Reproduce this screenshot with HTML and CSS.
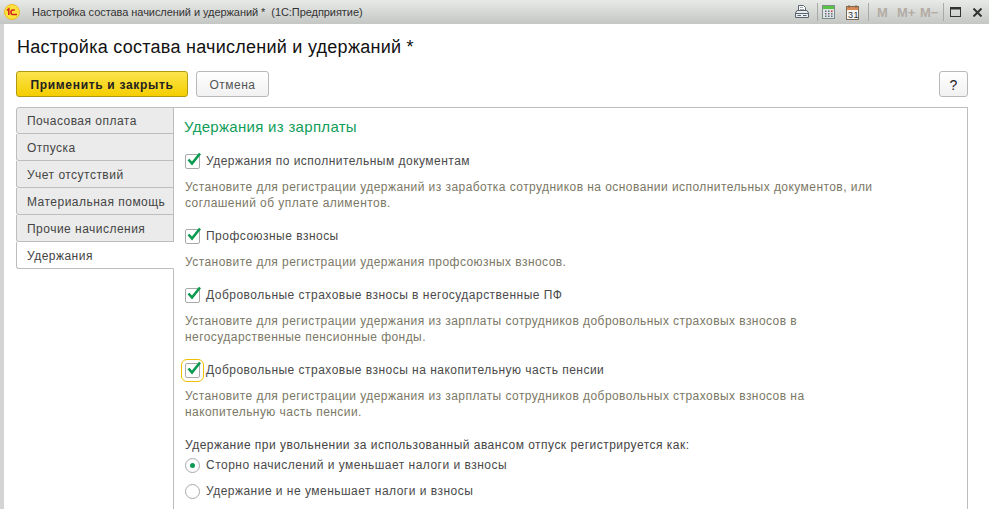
FILE: index.html
```html
<!DOCTYPE html>
<html lang="ru">
<head>
<meta charset="utf-8">
<title>Настройка состава начислений и удержаний</title>
<link rel="stylesheet" href="styles.css">
</head>
<body>
<header class="titlebar">
  <svg class="logo" width="18" height="18" viewBox="0 0 18 18"><circle cx="9" cy="9" r="7.500" fill="#fbe23c" stroke="#efb92c"/><path d="M4 7.500L5.800 6V12M11.800 7H9.700Q8 7 8 9.300T9.700 11.500H14" fill="none" stroke="#d3261c" stroke-width="1.600"/></svg>
  <span class="window-title">Настройка состава начислений и удержаний *&nbsp; (1С:Предприятие)</span>
  <div class="tools">
    <svg class="ic-print" width="16" height="14" viewBox="0 0 16 14" fill="none" stroke="#59656e"><path d="M4.500 5.500V.5H9.500L11.500 2.500V5.500" fill="#fff"/><path d="M6 2.500H9M6 4.500H10" stroke="#a5adb2"/><path d="M1.500 8L3 5.500H13L14.500 8V12.500H1.500Z" fill="#e9edef"/><path d="M1.500 8.500H14.500M3.500 10.500H7M9 10.500H12.500"/></svg>
    <i class="sep"></i>
    <svg class="ic-calc" width="13" height="14" viewBox="0 0 13 14"><rect x=".5" y=".5" width="12" height="13" fill="#dfe4e6" stroke="#7f8c8c"/><rect x="1" y="1" width="11" height="3" fill="#58c244"/><path d="M3 5.500h1.500v1.500H3zM6 5.500h1.500v1.500H6zM3 8h1.500v1.500H3zM6 8h1.500v1.500H6zM9 8h1.500v1.500H9zM3 10.500h1.500v1.500H3zM6 10.500h1.500v1.500H6zM9 10.500h1.500v1.500H9z" fill="#66707a"/><path d="M9 5.500h1.500v1.500H9z" fill="#d9302a"/></svg>
    <svg class="ic-cal" width="13" height="15" viewBox="0 0 13 15"><rect x=".5" y="1.500" width="12" height="13" fill="#f4f6f7" stroke="#7b6a58"/><rect x="1" y="2" width="11" height="3" fill="#d98a55"/><path d="M3 0v3M10 0v3" stroke="#8a6440"/><text x="2" y="13" class="cal-text">31</text></svg>
    <i class="sep sep-cal"></i>
    <span class="mem mem-m">M</span><span class="mem mem-p">M+</span><span class="mem mem-n">M−</span>
    <i class="sep sep-mem"></i>
    <svg class="win-ic" width="11" height="10" viewBox="0 0 11 10" fill="none" stroke="#333"><rect x=".5" y=".5" width="10" height="9"/><path d="M0 1.500H11" stroke-width="2"/></svg>
    <svg class="close-ic" width="9" height="9" viewBox="0 0 9 9" stroke="#333" stroke-width="2"><path d="M.5 .5L8.500 8.500M8.500 .5L.5 8.500"/></svg>
  </div>
</header>
<main class="window">
  <h1 class="form-title">Настройка состава начислений и удержаний *</h1>
  <div class="toolbar">
    <button class="btn btn-primary">Применить и закрыть</button>
    <button class="btn btn-cancel">Отмена</button>
    <button class="btn btn-help">?</button>
  </div>
  <div class="tabs-area">
    <nav class="tabs">
      <div class="tab">Почасовая оплата</div>
      <div class="tab">Отпуска</div>
      <div class="tab">Учет отсутствий</div>
      <div class="tab">Материальная помощь</div>
      <div class="tab">Прочие начисления</div>
      <div class="tab tab-active">Удержания</div>
    </nav>
    <section class="panel">
      <h2 class="panel-title">Удержания из зарплаты</h2>
      <label class="check"><span class="box"><svg width="16" height="15" viewBox="0 0 16 15"><path d="M2.500 7.500L6 11.500L14 1.500" fill="none" stroke="#0a9a50" stroke-width="2.600"/></svg></span>Удержания по исполнительным документам</label>
      <p class="hint">Установите для регистрации удержаний из заработка сотрудников на основании исполнительных документов, или<br>соглашений об уплате алиментов.</p>
      <label class="check"><span class="box"><svg width="16" height="15" viewBox="0 0 16 15"><path d="M2.500 7.500L6 11.500L14 1.500" fill="none" stroke="#0a9a50" stroke-width="2.600"/></svg></span>Профсоюзные взносы</label>
      <p class="hint">Установите для регистрации удержания профсоюзных взносов.</p>
      <label class="check"><span class="box"><svg width="16" height="15" viewBox="0 0 16 15"><path d="M2.500 7.500L6 11.500L14 1.500" fill="none" stroke="#0a9a50" stroke-width="2.600"/></svg></span>Добровольные страховые взносы в негосударственные ПФ</label>
      <p class="hint">Установите для регистрации удержания из зарплаты сотрудников добровольных страховых взносов в<br>негосударственные пенсионные фонды.</p>
      <label class="check"><span class="box box-focus"><svg width="16" height="15" viewBox="0 0 16 15"><path d="M2.500 7.500L6 11.500L14 1.500" fill="none" stroke="#0a9a50" stroke-width="2.600"/></svg></span>Добровольные страховые взносы на накопительную часть пенсии</label>
      <p class="hint">Установите для регистрации удержания из зарплаты сотрудников добровольных страховых взносов на<br>накопительную часть пенсии.</p>
      <p class="question">Удержание при увольнении за использованный авансом отпуск регистрируется как:</p>
      <label class="radio"><span class="dot dot-on"></span>Сторно начислений и уменьшает налоги и взносы</label>
      <label class="radio"><span class="dot"></span>Удержание и не уменьшает налоги и взносы</label>
    </section>
  </div>
</main>
</body>
</html>
```
FILE: styles.css
```css
* { box-sizing: border-box; }
html, body { margin: 0; height: 100%; overflow: hidden; }
body {
  width: 989px;
  height: 509px;
  background: #fff;
  font-family: "Liberation Sans", Arial, sans-serif;
  font-size: 12px;
  letter-spacing: .48px;
  color: #4a4a4a;
  display: flex;
  flex-direction: column;
}
.titlebar {
  height: 24px;
  flex: none;
  display: flex;
  align-items: center;
  padding-left: 3px;
  background: linear-gradient(#e8eae8, #c4c6c4);
}
.logo { flex: none; }
.window-title {
  margin-left: 11px;
  font-size: 11px;
  letter-spacing: -.06px;
  color: #333;
  white-space: pre;
}
.tools {
  margin-left: auto;
  display: flex;
  align-items: center;
  height: 24px;
  padding-right: 7px;
}
.sep { width: 1px; height: 18px; background: #a8aaa8; margin: 0 4px 0 7px; }
.ic-calc { flex: none; }
.ic-cal { margin-left: 11px; flex: none; }
.sep.sep-cal { margin: 0 8px 0 9px; }
.sep.sep-mem { margin: 0 6px 0 8px; }
.cal-text { font: 9px "Liberation Sans", sans-serif; fill: #333; }
.mem { font-size: 13px; font-weight: bold; color: #b3aca4; letter-spacing: 0; }
.mem-m { width: 9px; overflow: visible; margin-right: 11px; }
.mem-p { width: 17px; margin-right: 6px; }
.mem-n { width: 15px; }
.win-ic { margin-right: 12px; flex: none; }
.close-ic { flex: none; }
.window {
  flex: 1;
  min-height: 0;
  display: flex;
  flex-direction: column;
  border-left: 4px solid #d4d4d4;
  padding: 0 21px 0 12px;
}
.form-title {
  margin: 11px 0 0;
  height: 24px;
  font-size: 18px;
  line-height: 24px;
  font-weight: normal;
  letter-spacing: .26px;
  color: #111;
  padding-left: 1px;
}
.toolbar { display: flex; margin-top: 12px; height: 26px; }
.btn {
  height: 26px;
  border-radius: 3px;
  font-family: inherit;
  font-size: 12px;
  letter-spacing: .46px;
  padding: 1px 0 0;
  cursor: default;
}
.btn-primary {
  width: 172px;
  border: 1px solid #b29b10;
  background: linear-gradient(#fbe44e, #f5ce00);
  font-weight: bold;
  letter-spacing: .69px;
  color: #222;
}
.btn-cancel {
  width: 73px;
  margin-left: 8px;
  border: 1px solid #b8b8b8;
  background: linear-gradient(#fff, #f1f1f1);
  color: #555;
}
.btn-help {
  width: 29px;
  margin-left: auto;
  border: 1px solid #b8b8b8;
  background: linear-gradient(#fff, #f1f1f1);
  font-size: 14px;
  color: #222;
}
.tabs-area { flex: 1; min-height: 0; display: flex; margin-top: 10px; }
.tabs { width: 158px; flex: none; display: flex; flex-direction: column; }
.tab {
  height: 27px;
  padding: 1px 0 0 10px;
  display: flex;
  align-items: center;
  background: #ebebeb;
  border: 1px solid #bdbdbd;
  border-top-width: 0;
  border-radius: 0 0 0 3px;
  color: #444;
  white-space: nowrap;
}
.tab:first-child { padding-top: 0; border-top-width: 1px; border-radius: 3px 0 0 3px; }
.tab-active { position: relative; background: #fff; border-right-color: #fff; border-radius: 0 0 0 3px; }
.panel {
  flex: 1;
  min-width: 0;
  border: 1px solid #bdbdbd;
  border-bottom: 0;
  margin-left: -1px;
  padding: 10px 0 0 11px;
  overflow: hidden;
}
.panel-title {
  margin: 0 0 15px -1px;
  font-size: 15px;
  line-height: 18px;
  font-weight: normal;
  letter-spacing: .3px;
  color: #0f9d58;
}
.check { display: flex; align-items: center; height: 20px; }
.box {
  position: relative;
  width: 15px;
  height: 15px;
  margin-right: 6px;
  flex: none;
  border: 1px solid #a9a9a9;
  border-radius: 2px;
  background: #fff;
}
.box svg { position: absolute; left: 0; top: -3px; }
.box-focus { outline: 1px solid #f0c000; outline-offset: 3px; }
.hint { margin: 8px 0 15px; line-height: 16px; letter-spacing: .44px; color: #7b7866; }
.question { margin: 17px 0 2px; line-height: 16px; color: #444; }
.radio { display: flex; align-items: center; height: 20px; margin-bottom: 6px; }
.dot {
  width: 15px;
  height: 15px;
  margin-right: 6px;
  flex: none;
  border: 1px solid #a9a9a9;
  border-radius: 50%;
  background: #fff;
  display: flex;
  align-items: center;
  justify-content: center;
}
.dot-on::after { content: ""; width: 5px; height: 5px; border-radius: 50%; background: #0c9a52; }
```
